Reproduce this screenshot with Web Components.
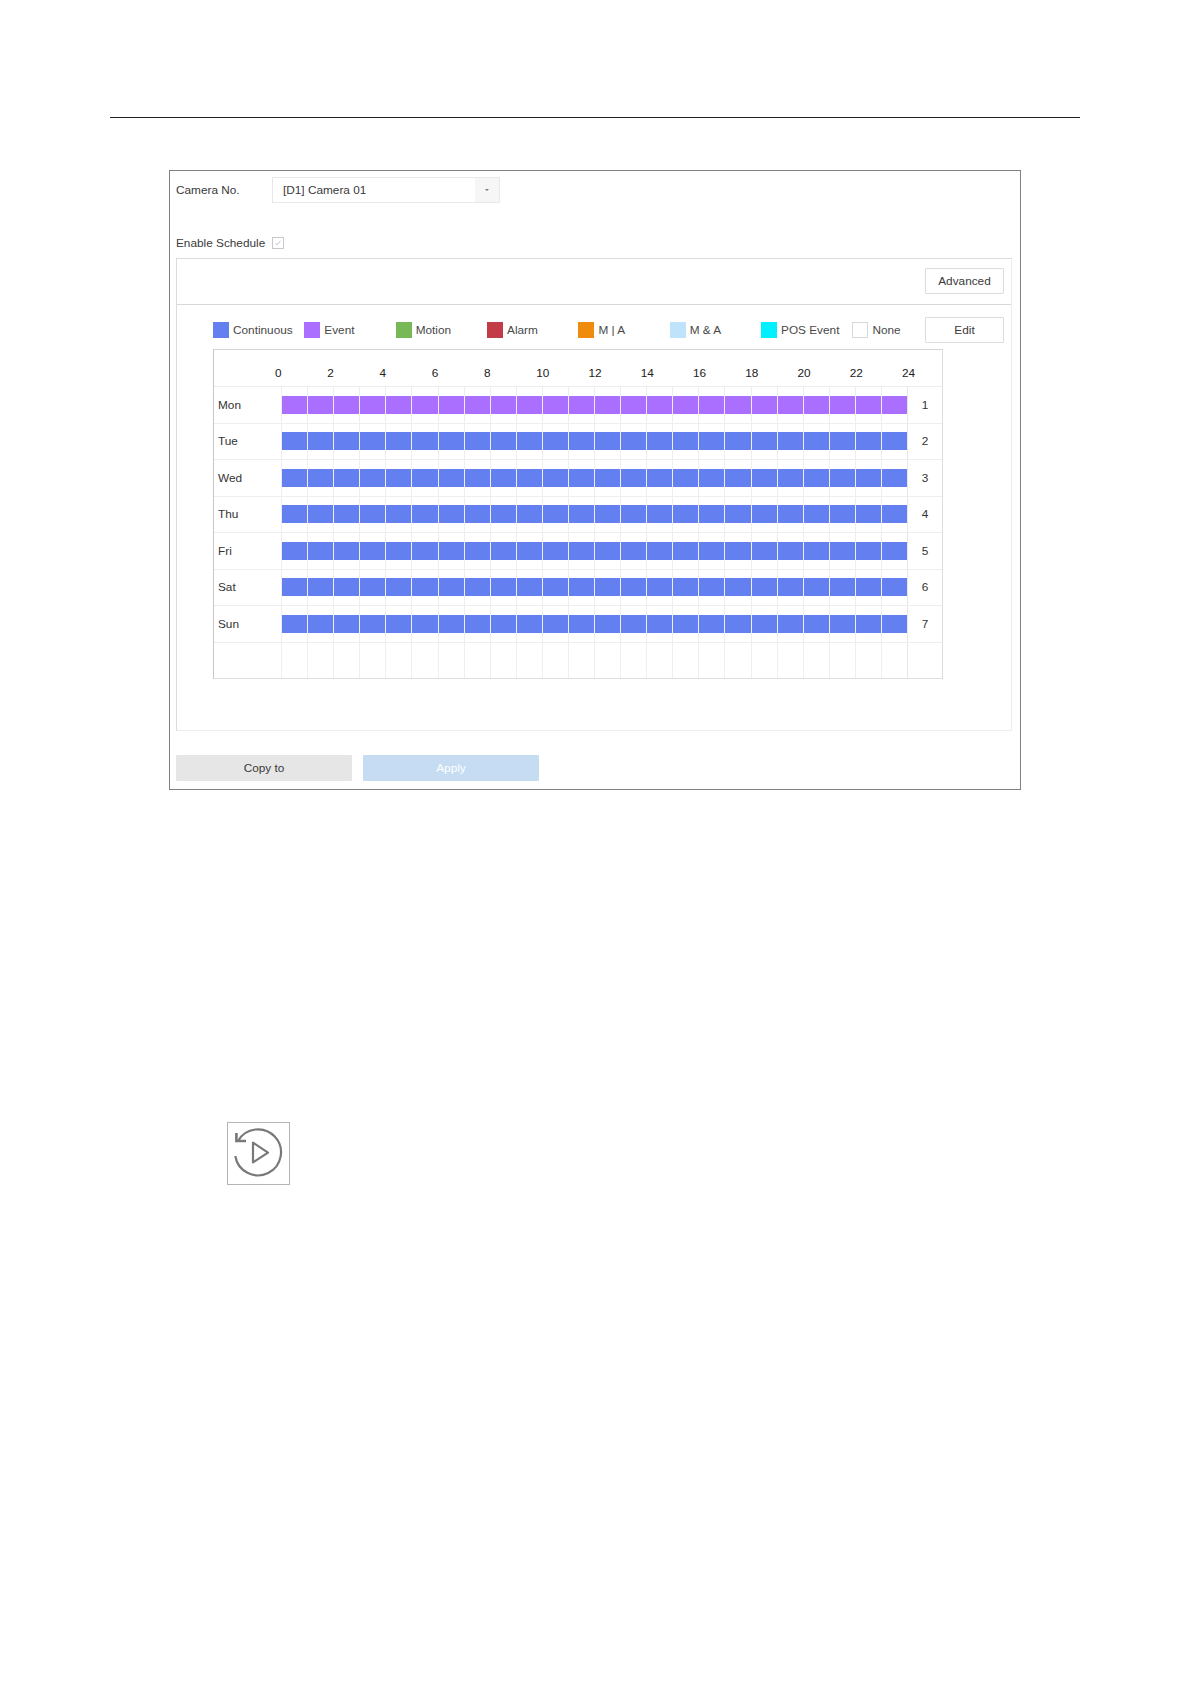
<!DOCTYPE html>
<html lang="en">
<head>
<meta charset="utf-8">
<title>Schedule</title>
<style>
  html, body { margin: 0; background: #fff; }
  body { font: 11.8px "Liberation Sans", Arial, sans-serif; color: #3a3a3a; }
</style>
</head>
<body>
<manual-page>
  <schedule-panel camera="[D1] Camera 01"></schedule-panel>
  <icon-tile></icon-tile>
</manual-page>

<script>
const COLORS = {
  blue: '#637ff0',
  purple: '#ab6fff'
};

class ManualPage extends HTMLElement {
  constructor() {
    super();
    this.attachShadow({ mode: 'open' }).innerHTML = `
      <style>
        :host { display: block; width: 1191px; height: 1684px; overflow: hidden; box-sizing: border-box; padding-top: 117px; }
        #rule { height: 1px; background: #222; margin-left: 110px; width: 970px; }
        #content { padding: 52px 0 0 169px; display: flex; flex-direction: column; }
      </style>
      <div id="rule"></div>
      <div id="content"><slot></slot></div>
    `;
  }
}

class PushButton extends HTMLElement {
  constructor() {
    super();
    this.attachShadow({ mode: 'open' }).innerHTML = `
      <style>
        :host {
          display: flex; align-items: center; justify-content: center; box-sizing: border-box;
          width: 79px; height: 26px; border: 1px solid #dcdcdc; background: #fff; color: #3a3a3a;
          border-radius: 1px;
        }
        :host([variant="grey"]) { width: 176px; border: 0; background: #e6e6e6; }
        :host([variant="primary"]) { width: 176px; border: 0; background: #c5dcf3; color: #fff; }
      </style>
      <slot></slot>
    `;
  }
}

class LegendItem extends HTMLElement {
  constructor() {
    super();
    this.attachShadow({ mode: 'open' }).innerHTML = `
      <style>
        :host { display: flex; align-items: center; gap: 4px; flex: 0 0 91.35px; color: #484848; }
        #swatch { width: 16px; height: 16px; box-sizing: border-box; }
        :host([empty]) #swatch { border: 1px solid #d8d8d8; }
      </style>
      <div id="swatch"></div>
      <slot></slot>
    `;
    this.shadowRoot.getElementById('swatch').style.background = this.getAttribute('color') || '#fff';
  }
}

class ScheduleRow extends HTMLElement {
  constructor() {
    super();
    const cells = Array.from({ length: 24 }, () => '<div class="cell"><i></i></div>').join('');
    this.attachShadow({ mode: 'open' }).innerHTML = `
      <style>
        :host { display: grid; grid-template-columns: 67px repeat(24, minmax(0, 1fr)) 35px; border-bottom: 1px solid #eee; box-sizing: border-box; color: #333; }
        :host(:last-child) { border-bottom: 0; }
        #day { display: flex; align-items: center; padding-left: 4px; }
        #num { display: flex; align-items: center; justify-content: center; border-left: 1px solid #e6e6e6; }
        .cell { display: flex; align-items: center; border-left: 1px solid #eeeeee; }
        .cell i { display: block; flex: 1; height: 18px; background: var(--bar, transparent); }
      </style>
      <div id="day"><slot></slot></div>
      ${cells}
      <div id="num">${this.getAttribute('num') || ''}</div>
    `;
    if (this.hasAttribute('color')) this.style.setProperty('--bar', COLORS[this.getAttribute('color')]);
  }
}

class HourAxis extends HTMLElement {
  constructor() {
    super();
    let hours = '';
    for (let h = 0; h <= 24; h += 2) hours += `<span>${h}</span>`;
    this.attachShadow({ mode: 'open' }).innerHTML = `
      <style>
        :host { display: flex; align-items: center; padding: 9px 0 0 61px; border-bottom: 1px solid #eee; box-sizing: border-box; color: #222; min-width: 0; overflow: hidden; }
        span { flex: 0 0 52.25px; }
        span:last-child { flex: 0 0 auto; }
      </style>
      ${hours}
    `;
  }
}

class ScheduleGrid extends HTMLElement {
  constructor() {
    super();
    this.attachShadow({ mode: 'open' }).innerHTML = `
      <style>
        :host {
          display: grid; grid-template-columns: minmax(0, 1fr); grid-template-rows: 37px repeat(7, 36.5px) 35.5px; box-sizing: border-box;
          width: 730px; border: 1px solid #dedede; border-left-color: #c8c8c8; border-top-color: #d4d4d4;
        }
      </style>
      <slot></slot>
    `;
  }
}

class SchedulePanel extends HTMLElement {
  constructor() {
    super();
    const days = ['Mon', 'Tue', 'Wed', 'Thu', 'Fri', 'Sat', 'Sun'];
    const rows = days.map((d, i) =>
      `<schedule-row num="${i + 1}" color="${i === 0 ? 'purple' : 'blue'}">${d}</schedule-row>`).join('');
    this.attachShadow({ mode: 'open' }).innerHTML = `
      <style>
        :host {
          display: block; box-sizing: border-box; width: 852px; height: 620px;
          border: 1px solid #808080; padding: 6px 8px 0 6px; color: #3a3a3a;
        }
        #camera { display: flex; align-items: center; height: 26px; }
        #camera label { width: 96px; }
        #select { display: flex; align-items: center; box-sizing: border-box; width: 228px; height: 26px; border: 1px solid #e8e8e8; }
        #value { flex: 1; padding-left: 10px; }
        #arrow { display: flex; align-items: center; justify-content: center; width: 24px; height: 100%; background: #f6f6f6; }
        #arrow::before { content: ""; border: 2px solid transparent; border-top: 2px solid #777; border-bottom: 0; border-left-width: 2.5px; border-right-width: 2.5px; }
        #enable { display: flex; align-items: center; height: 14px; margin-top: 33px; }
        #enable label { width: 96px; }
        #check { box-sizing: border-box; width: 12px; height: 12px; border: 1px solid #c8c8c8; display: block; }
        #inner { box-sizing: border-box; width: 836px; height: 473px; margin-top: 8px; border: 1px solid #dcdcdc; border-bottom-color: #ececec; border-right-color: #ececec; }
        #top { display: flex; justify-content: flex-end; align-items: center; box-sizing: border-box; height: 46px; padding: 0 7px 2px 0; border-bottom: 1px solid #d8d8d8; }
        #body { padding: 12px 0 0 36px; }
        #legend { display: flex; align-items: center; height: 26px; margin-bottom: 6px; padding-right: 7px; }
        #legend push-button { margin-left: auto; }
        #actions { display: flex; gap: 11px; margin-top: 24px; }
      </style>
      <div id="camera">
        <label>Camera No.</label>
        <div id="select"><span id="value">${this.getAttribute('camera')}</span><span id="arrow"></span></div>
      </div>
      <div id="enable">
        <label>Enable Schedule</label>
        <svg id="check" viewBox="0 0 12 12" fill="none"><path d="M3 6.2 5 8.2 9 3.5" stroke="#9fb4d8" stroke-width="1"/></svg>
      </div>
      <div id="inner">
        <div id="top"><push-button>Advanced</push-button></div>
        <div id="body">
          <div id="legend">
            <legend-item color="#637ff0">Continuous</legend-item>
            <legend-item color="#ab6fff">Event</legend-item>
            <legend-item color="#79b857">Motion</legend-item>
            <legend-item color="#c23b47">Alarm</legend-item>
            <legend-item color="#ef8c0e">M | A</legend-item>
            <legend-item color="#bfe3fb">M &amp; A</legend-item>
            <legend-item color="#00f0ff">POS Event</legend-item>
            <legend-item empty style="flex-basis:auto">None</legend-item>
            <push-button>Edit</push-button>
          </div>
          <schedule-grid>
            <hour-axis></hour-axis>
            ${rows}
            <schedule-row></schedule-row>
          </schedule-grid>
        </div>
      </div>
      <div id="actions">
        <push-button variant="grey">Copy to</push-button>
        <push-button variant="primary">Apply</push-button>
      </div>
    `;
  }
}

class IconTile extends HTMLElement {
  constructor() {
    super();
    this.attachShadow({ mode: 'open' }).innerHTML = `
      <style>
        :host { display: block; box-sizing: border-box; width: 63px; height: 63px; margin: 332px 0 0 58px; border: 1px solid #b4b4b4; }
        svg { display: block; width: 61px; height: 61px; }
      </style>
      <svg viewBox="1 1 61 61" fill="none" stroke="#787878" stroke-width="2.2">
        <path d="M11 19A23 23 0 1 1 8.3 34"/>
        <path d="M9.4 11V19H19" stroke-width="2.6"/>
        <path d="M26 20.6V40.4L41 30.6Z" stroke-linejoin="round"/>
      </svg>
    `;
  }
}

customElements.define('push-button', PushButton);
customElements.define('legend-item', LegendItem);
customElements.define('schedule-row', ScheduleRow);
customElements.define('hour-axis', HourAxis);
customElements.define('schedule-grid', ScheduleGrid);
customElements.define('schedule-panel', SchedulePanel);
customElements.define('icon-tile', IconTile);
customElements.define('manual-page', ManualPage);
</script>
</body>
</html>
